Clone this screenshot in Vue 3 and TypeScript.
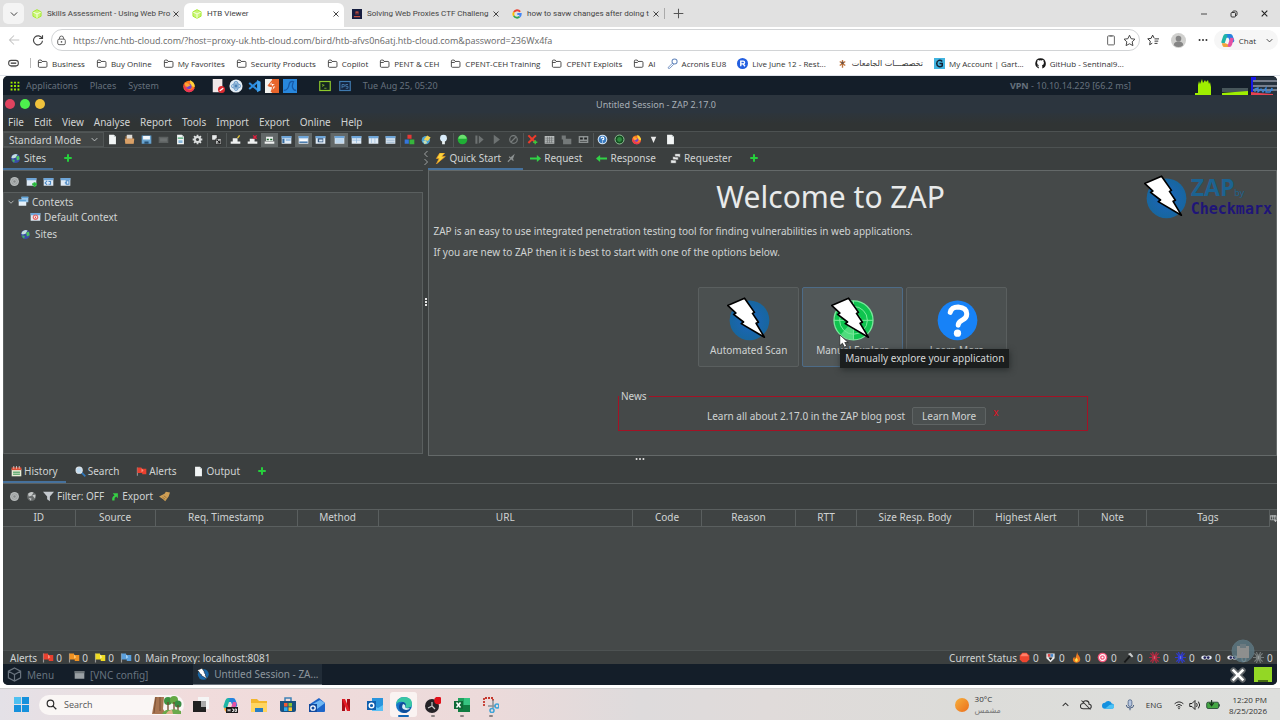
<script setup lang="ts">
import { h, ref } from 'vue'

type IconProps = { name: string; w?: number; h?: number; box?: string }

const folder = '<path d="M2 4.500Q2 3 3.500 3H6l1.500 2H13q1.500 0 1.500 1.500V12q0 1.500-1.500 1.500H3.500Q2 13.500 2 12zM2 6.500h4.500L8 5" fill="none" stroke="#3c3c3c" stroke-width="1.300"/>'
const flag = (a: string, b: string) =>
  `<path d="M2 2v12" stroke="#999" stroke-width="1.500"/><path d="M2 2h6v2h7v8H9v-2H2z" fill="${a}"/><path d="M8 3v6l3-2z" fill="${b}"/>`
const win = (inner: string) => `<path d="M1 3h14v11H1z" fill="#dfeaf5"/><path d="M1 3h14v3H1z" fill="#6ea5d8"/>${inner}`
const spider = (c: string) =>
  `<g stroke="${c}" fill="none" stroke-width="1.700"><path d="M8 8L2 2M8 8l6-6M0 8h16M8 8l-6 6M8 8l6 6M8 8L5 0M8 8l3-8M8 8l-3 8M8 8l3 8"/></g><ellipse cx="8" cy="8" rx="4" ry="4.500" fill="${c}"/><path d="M7 6h2v4H7z" fill="#cfd3d3" opacity=".4"/>`
const bolt = '<path d="M2 25 53 3 83 46 77 49 95 76 88 79 113 121 43 80 50 75 20 52 27 48z" fill="#fff" stroke="#000" stroke-width="5" stroke-linejoin="round"/>'
const page = (extra = '') => `<path d="M3 1h7l3 3v11H3z" fill="#f2f5f5"/><path d="M10 1v3h3" fill="#b6c0c0"/>${extra}`
const globe = '<circle cx="8" cy="8" r="6.500" fill="#3a4aa8"/><path d="M3 4q4-4 8-2L8 7 4 8 2 7z" fill="#c5dfe0"/><path d="M9 5l4-1 1 5-4 2z" fill="#4fc560"/><path d="M3 9l4 1-1 4q-3-2-3-5z" fill="#46b45a"/>'
const fox = '<circle cx="8" cy="8.500" r="6.500" fill="#ff7a1c"/><path d="M9 1q6 3 5.500 8L10 8z" fill="#ffd43a"/><path d="M2 5q-1 9 6 10 5 0 6.500-5Q8 16 4 9z" fill="#ec3157"/><circle cx="8" cy="8.500" r="3" fill="#7542c9"/><path d="M3 4l4 1 3 2-4 2-2-1z" fill="#ffa436"/>'
const eyes = '<ellipse cx="4.500" cy="8" rx="4" ry="3" fill="#e8ecf2"/><ellipse cx="11.500" cy="8" rx="4" ry="3" fill="#e8ecf2"/><circle cx="5.500" cy="8" r="2" fill="#20205a"/><circle cx="10.500" cy="8" r="2" fill="#20205a"/>'
const copilot = '<path d="M6 1h5q2 0 2.500 2L15 7q1 3-2 3h-2L9 5H5z" fill="#2583e0"/><path d="M6 1Q4 1 3.300 3.500L1.500 9Q1 11 3 11h2l2-6 1-3z" fill="#1fb6a6"/><path d="M10 15H5q-2 0-2.500-2L2 11h4l2 1h3z" fill="#f2a43a"/><path d="M10 15q2 0 2.800-2.500L14.500 7Q15 5 13 5h-2L9 11l-1 3z" fill="#e451a4"/>'

const art: Record<string, string> = {
  folder, fox, globe, copilot, eyes,
  chev: '<path d="M3 5.500l5 5 5-5" fill="none" stroke="currentColor" stroke-width="1.500"/>',
  chevUp: '<path d="M3 10.500l5-5 5 5" fill="none" stroke="currentColor" stroke-width="1.800"/>',
  chevLeft: '<path d="M11 2L5 8l6 6" fill="none" stroke="currentColor" stroke-width="1.800"/>',
  chevRight: '<path d="M5 2l6 6-6 6" fill="none" stroke="currentColor" stroke-width="1.800"/>',
  x: '<path d="M3 3l10 10M13 3L3 13" fill="none" stroke="currentColor" stroke-width="2"/>',
  plus: '<path d="M8 1v14M1 8h14" fill="none" stroke="currentColor" stroke-width="1.500"/>',
  add: '<path d="M8 2v12M2 8h12" fill="none" stroke="#26cf3c" stroke-width="3.200"/>',
  cube: '<path d="M8 1l6.500 3.500v7L8 15l-6.500-3.500v-7z" fill="#c9f574" stroke="#a2ea2c" stroke-width="1.500"/><path d="M2 5l6 3 6-3M8 8v7" fill="none" stroke="#f4ffdf" stroke-width="1.700"/>',
  ctf: '<path d="M0 0h16v16H0z" fill="#151c3f"/><path d="M5 4h6v5H5z" fill="#6c3038"/><path d="M6 4h4v2H6zM3 11h10v2H3z" fill="#c35345"/>',
  google: '<g fill="none" stroke-width="3"><path d="M13 4.500A6 6 0 0 0 3 5" stroke="#ea4335"/><path d="M3 5a6 6 0 0 0 0 6" stroke="#fbbc05"/><path d="M3 11a6 6 0 0 0 9 1.500" stroke="#34a853"/><path d="M8.500 8H14q0 3-2 4.500" stroke="#4285f4"/></g>',
  min: '<path d="M2 8h12" stroke="currentColor" stroke-width="1.600"/>',
  restore: '<rect x="2" y="5" width="9" height="9" rx="2" fill="none" stroke="currentColor" stroke-width="1.800"/><path d="M5 4.500Q5 2 7.500 2H11q3 0 3 3v4q0 2-2 2.500" fill="none" stroke="currentColor" stroke-width="1.800"/>',
  back: '<path d="M15 8H2M8 2L2 8l6 6" fill="none" stroke="#c4c4c4" stroke-width="1.400"/>',
  reload: '<path d="M13.500 6A6 6 0 1 0 14 9M14 1.500V6H9.500" fill="none" stroke="#444" stroke-width="1.500"/>',
  lock: '<rect x="2.500" y="6" width="11" height="8" rx="2" fill="none" stroke="#555" stroke-width="1.300"/><path d="M5 6V4.500a3 3 0 0 1 6 0V6" fill="none" stroke="#555" stroke-width="1.300"/><circle cx="8" cy="10" r="1.200" fill="#555"/>',
  clip: '<rect x="3.500" y="2.500" width="9" height="12" rx="1" fill="none" stroke="#555" stroke-width="1.200"/><path d="M6 1.500h4v2H6z" fill="#777"/>',
  star: '<path d="M8 1.500l2 4.300 4.700.6-3.400 3.200.9 4.700L8 12l-4.200 2.300.9-4.700L1.300 6.400 6 5.800z" fill="none" stroke="#444" stroke-width="1.200"/>',
  favs: '<path d="M9.500 5.500L7.500 1.500l-2 4.300-4.500.6 3.400 3.200-.9 4.700 3.500-2M10 6.500h6M10 9.500h5M10 12.500h4" fill="none" stroke="#333" stroke-width="1.300"/>',
  user: '<circle cx="8" cy="8" r="8" fill="#d0d0ce"/><circle cx="8" cy="6" r="3" fill="#858585"/><path d="M3 13q0-4 5-4t5 4q-5 4-10 0z" fill="#858585"/>',
  dots: '<g fill="currentColor"><circle cx="2.500" cy="8" r="1.600"/><circle cx="8" cy="8" r="1.600"/><circle cx="13.500" cy="8" r="1.600"/></g>',
  tag: '<rect x="1" y="3.500" width="14" height="8" rx="3.500" fill="none" stroke="#444" stroke-width="1.600"/><path d="M4 7.500h8" stroke="#444" stroke-width="2"/><path d="M4 12.500h8" stroke="#777" stroke-width="1.500"/>',
  key: '<circle cx="11" cy="5" r="3.700" fill="none" stroke="#6688bd" stroke-width="1.500"/><path d="M8 7.500L2 13.500v1.500h2l6-6" fill="none" stroke="#6688bd" stroke-width="1.300"/>',
  live: '<circle cx="8" cy="8" r="8" fill="#235fe0"/><path d="M5.500 12V4.500H9q2 0 2 2T9 8.500H6M9 8.500l2.500 3.500" fill="none" stroke="#fff" stroke-width="2"/>',
  uni: '<path d="M8 3v11M4 5l8 6M12 5l-8 6" stroke="#c0763f" stroke-width="2"/><circle cx="8" cy="7" r="2" fill="#6b5245"/>',
  gart: '<path d="M0 0h16v16H0z" fill="#41b4e0"/><path d="M12 5Q10 3 7 3.500 4 4.500 4 8t3 4.500q3 .5 5-1V8H8" fill="none" stroke="#123" stroke-width="2.200"/>',
  github: '<path d="M8 .5a7.500 7.500 0 0 0-2.500 14.600V12.500q-2 .5-2.700-1.500 2 .8 3-.5Q3 10 3 7q0-1.500.8-2.200-.3-1.200.1-2.300 1 0 2.200 1 2-.5 3.800 0 1.200-1 2.200-1 .4 1 .1 2.300.8.8.8 2.200 0 3-2.800 3.500.4.500.4 1.500v3.100A7.500 7.500 0 0 0 8 .5z" fill="#181818"/>',
  apps: '<g fill="#9fef00"><path d="M1 1h3v3H1zM6.500 1h3v3h-3zM12 1h3v3h-3zM1 6.500h3v3H1zM6.500 6.500h3v3h-3zM12 6.500h3v3h-3zM1 12h3v3H1zM6.500 12h3v3h-3zM12 12h3v3h-3z"/></g>',
  blocked: '<path d="M2 0h11v15H2z" fill="#f2e9e9"/><circle cx="12" cy="12" r="4" fill="#dc2a30"/><path d="M10 13.500l4-3" stroke="#fff" stroke-width="1.500"/>',
  atom: '<circle cx="8" cy="8" r="7.500" fill="#e4edf6"/><g fill="none" stroke="#6f9fcc" stroke-width="1.200"><ellipse cx="8" cy="8" rx="5" ry="2.500"/><ellipse cx="8" cy="8" rx="2.500" ry="5"/></g><circle cx="8" cy="8" r="2" fill="#4a83b8"/>',
  vscode: '<path d="M12 3.500L2.500 11.500M12 12.500L2.500 4.500" fill="none" stroke="#2c8de0" stroke-width="2.400"/><path d="M11.500 1v14l4-2V3z" fill="#3fa2ee"/>',
  burp: '<path d="M0 0h8v16H0z" fill="#f2f2ef"/><path d="M8 0h8v16H8z" fill="#e8642a"/><path d="M9 1L4 7h4l-4 1 5 1-2 6 6-7H9l4-2-5-1z" fill="#fff" stroke="#e8642a" stroke-width="1.200"/>',
  shark: '<path d="M0 0h16v16H0z" fill="#2887dc"/><path d="M1 13q5 0 6-7 1-4 5-3-2 5-1 7 1 3 4 3" fill="none" stroke="#1659a8" stroke-width="1.500"/>',
  term: '<rect x="1" y="2" width="14" height="12" fill="#14251f" stroke="#8ec92c" stroke-width="1.600"/><path d="M4 6l3 1-3 1.500M7 11h3" fill="none" stroke="#8ec92c"/>',
  ps: '<rect x="1" y="2" width="14" height="12" fill="#14233c" stroke="#3f79ae" stroke-width="1.600"/><path d="M4 11V6h3v3H4M12 6H9v2.500h3V11H9" fill="none" stroke="#4f88be"/>',
  page: page(),
  open: '<path d="M2 3h8l4 3v8H2z" fill="#8e6840"/><path d="M4 1h8v6H4z" fill="#dedbd5"/><path d="M1 7h14l-1 7H2z" fill="#d9a067"/>',
  save: '<path d="M1 2h14v12H1z" fill="#67a2cf"/><path d="M3 3h10v5H3z" fill="#f2f6fa"/><path d="M5 11h6v3H5z" fill="#274f70"/>',
  cam: '<path d="M1 4h14v9H1z" fill="#5c6161"/><path d="M3 6h10v5H3z" fill="#6c7171"/>',
  props: page('<path d="M4 5h8v2H4z" fill="#44a36d"/><path d="M5 9h6v4H5z" fill="#8ab7da"/>'),
  gear: '<path d="M8 1v14M1 8h14M3 3l10 10M13 3L3 13" stroke="#dadddd" stroke-width="2.600"/><circle cx="8" cy="8" r="5" fill="#dadddd"/><circle cx="8" cy="8" r="2.300" fill="#3b3f3f"/>',
  swap: '<path d="M1 1h8v8H1zM7 7h8v8H7z" fill="#e7eaea" stroke="#111"/><path d="M9 9l4 4M13 9v4H9" stroke="#111" fill="none" stroke-width="1.500"/>',
  tabOn: '<path d="M1 11h14v3H1zM4 6h7v5H4z" fill="#eef0f0"/><path d="M11 6l3-4" stroke="#dfc03a" stroke-width="2"/>',
  tabOff: '<path d="M1 11h14v3H1zM4 7h7v4H4z" fill="#eef0f0"/><path d="M9 2l5 5M14 2L9 7" stroke="#e01f3d" stroke-width="2"/>',
  names: '<path d="M1 11h14v3H1zM3 4h10v6H3z" fill="#eef0f0"/><path d="M4 8h3M9 8h3" stroke="#1a6a2a" stroke-width="2"/>',
  l1: win('<path d="M2 7h3v6H2z" fill="#33699e"/><path d="M7 7h7v3H7z" fill="#9bc0e4"/>'),
  l2: win('<path d="M3 8h10v2H3z" fill="#fff"/><path d="M2 11h12v2H2z" fill="#4d7dad"/>'),
  l3: win('<path d="M4 6h8v6H4z" fill="#33567c"/><path d="M6 8h5v3H6z" fill="#d8e6f3"/>'),
  l4: win('<path d="M2 7h12v6H2z" fill="#bcd7ee"/>'),
  l5: win('<path d="M2 9h12" stroke="#8cb4da"/><path d="M8 6v7" stroke="#8cb4da"/>'),
  l6: win('<path d="M5 6v7M10 6v7" stroke="#9bbbd9"/>'),
  l7: win('<path d="M2 9h12M2 12h12" stroke="#7e9fbe"/>'),
  blocks: '<path d="M5 1h6v6H5z" fill="#e43a37"/><path d="M1 8h6v6H1z" fill="#3476dc"/><path d="M8 8h7v7H8z" fill="#36b53c"/>',
  update: '<circle cx="7" cy="9" r="6" fill="#4ba5d8"/><path d="M4 8l5-6 5 3-4 5z" fill="#f0d354"/><path d="M3 10l4-1 2 4-4 2z" fill="#c7ddb0"/>',
  bulb: '<circle cx="8" cy="6" r="5" fill="#d9ecfa"/><path d="M6 10h4v5H6z" fill="#e9f0f2"/>',
  go: '<circle cx="8" cy="8" r="7" fill="#1faf35"/><path d="M2 7a6 6 0 0 1 12 0z" fill="#6be070"/>',
  step: '<path d="M2 2h3v12H2zM7 2v12l7-6z" fill="#6d7272"/>',
  play: '<path d="M4 1v14l9-7z" fill="#6d7272"/>',
  ban: '<circle cx="8" cy="8" r="5.500" fill="none" stroke="#777c7c" stroke-width="1.800"/><path d="M4 12l8-8" stroke="#777c7c" stroke-width="1.800"/>',
  del: '<path d="M2 2l11 11M13 2L2 13" stroke="#ee3b2b" stroke-width="3"/><path d="M9 12h6M12 9v6" stroke="#35c93e" stroke-width="2"/>',
  kbd: '<path d="M1 3h14v11H1z" fill="#b9bdbd"/><path d="M2 6h12M2 9h12M2 12h12M5 4v9M8 4v9M11 4v9" stroke="#6d7171"/>',
  lockOff: '<path d="M1 2h6v5h8v8H3V8H1z" fill="#747979"/>',
  print: '<path d="M1 3h14v10H1z" fill="#8e9393"/><path d="M3 5h4v3H3zM9 5h4v3H9zM3 10h10v1H3z" fill="#202424"/>',
  help: '<circle cx="8" cy="8" r="7" fill="#d7e8f7"/><circle cx="8" cy="8" r="5.500" fill="#3779bf"/><path d="M6 6.500q0-2 2-2t2 2-2 2v1M8 11v1.500" fill="none" stroke="#fff" stroke-width="1.600"/>',
  radar: '<circle cx="8" cy="8" r="6.500" fill="#134e20" stroke="#9ccda2" stroke-width="1.300"/><circle cx="8" cy="8" r="3.500" fill="#2f8c40"/>',
  drop: '<path d="M4 4h8l-4 9z" fill="#e9eaea"/>',
  target: '<circle cx="8" cy="8" r="6.500" fill="#b4b8b8"/><circle cx="8" cy="8" r="4" fill="none" stroke="#8d9191"/><circle cx="8" cy="8" r="1.800" fill="#868a8a"/>',
  w1: win('<path d="M9 12h7M12.500 9v7" stroke="#28b83c" stroke-width="3"/>'),
  w2: win('<path d="M6 7l-3 3 3 3M8 8h3v4H8" fill="none" stroke="#4a88c4" stroke-width="1.500"/>'),
  w3: win('<path d="M9 7h4v5H9zM7 10h3" fill="none" stroke="#4a88c4" stroke-width="1.500"/>'),
  ctxs: '<path d="M5 1h10v8H5z" fill="#9ac6ea"/><path d="M1 5h11v9H1z" fill="#e5f0f8"/><path d="M1 5h11v3H1zM5 1h10v2H5z" fill="#5fa4d9"/>',
  ctx: win('<circle cx="8" cy="9" r="4" fill="#e56b6b"/><circle cx="8" cy="9" r="2" fill="#fff"/><circle cx="8" cy="9" r="1" fill="#d33"/>'),
  quick: '<path d="M7 0h7l-4 5h5L2 16l4-8H2z" fill="#fbd43c" stroke="#e99a24"/>',
  pin: '<path d="M14 1l-3 9-4-3z" fill="#8e9393"/><path d="M5 6l7 6M8 9l-5 5" fill="none" stroke="#8e9393" stroke-width="1.800"/>',
  right: '<path d="M0 8h12" stroke="#31d246" stroke-width="3"/><path d="M10 3l6 5-6 5z" fill="#31d246"/>',
  left: '<path d="M4 8h12" stroke="#31d246" stroke-width="3"/><path d="M6 3L0 8l6 5z" fill="#31d246"/>',
  reqs: '<path d="M7 1h8v5H7zM4 5h8v5H4zM1 10h8v5H1z" fill="#e8ebeb" stroke="#333" stroke-width=".8"/>',
  cal: '<path d="M1 4h14v11H1z" fill="#e9edd6"/><path d="M1 2h14v4H1z" fill="#dd5038"/><path d="M3 9h10M3 12h10" stroke="#6bae78" stroke-width="2"/><path d="M4 0v4M8 0v4M12 0v4" stroke="#eee"/>',
  find: '<path d="M9 9l6 6" stroke="#2f78bd" stroke-width="2.500"/><circle cx="6" cy="6" r="4.500" fill="#bfdcf2" stroke="#e5e9ec" stroke-width="1.500"/>',
  flagR: flag('#e8402f', '#ff8b78'), flagO: flag('#f09222', '#ffc468'), flagY: flag('#eedb24', '#fff59b'), flagB: flag('#5ba0dd', '#a6d2f5'),
  filter: '<path d="M0 1h16l-6 7v7l-4-3V8z" fill="#c5cacf"/>',
  exportI: '<path d="M4 15q-1-7 4-9L5 2h9v9l-3-3q-4 2-3 7z" fill="#36cf44"/>',
  broom: '<path d="M0 8l8-4 2-3 6 1-2 6-5 7-3-3z" fill="#cf9f55"/><path d="M5 9l4 3M7 7l4 3" stroke="#83602c"/>',
  globeG: '<circle cx="8" cy="8" r="6.500" fill="#686c6c"/><path d="M3 4q4-4 8-2L8 7 4 8zM9 6l5-1-1 6zM4 10l4 1-1 3z" fill="#c5c8c8"/>',
  cols: '<path d="M1 1h13v10H1zM1 4h13M6 1v10M10 1v10" fill="none" stroke="#c5c8c8" stroke-width="1.500"/><path d="M9 12h7l-3.500 4z" fill="#ddd"/>',
  stop: '<path d="M5 1h6l4 4v6l-4 4H5l-4-4V5z" fill="#ee4630"/><path d="M5 2h6l3 4H2z" fill="#ff8068"/>',
  scan: '<path d="M2 2h12v7l-6 6-6-6z" fill="#e8e8e8"/><path d="M4 3h4v4H4z" fill="#d44"/><path d="M8 3h4v4H8z" fill="#48c"/><path d="M5 8h6l-3 4z" fill="#222"/>',
  fire: '<path d="M9 0q0 4 3 6 3 5 0 8-4 3-8 0-3-4 1-7 0 3 1 3 2-5 3-10z" fill="#ef7a20"/><path d="M8 8q3 3 1 6-4 1-3-3z" fill="#ffe14c"/>',
  bull: '<circle cx="8" cy="8" r="7" fill="#f2567a"/><circle cx="8" cy="8" r="4.200" fill="none" stroke="#fff" stroke-width="1.500"/><circle cx="8" cy="8" r="1.500" fill="#fff"/>',
  hammer: '<path d="M2 15l8-9" stroke="#17191a" stroke-width="2.600"/><path d="M7 3l4-2 4 5-2 2-3-3z" fill="#c8caca"/>',
  spR: spider('#b32a40'), spB: spider('#2f3bd0'), spG: spider('#757b7b'),
  hex: '<path d="M8 1l6.500 3.500v7L8 15l-6.500-3.500v-7zM1.500 4.500L8 8l6.500-3.500M8 8v7" fill="none" stroke="#68727d" stroke-width="1.300"/>',
  winGrey: '<path d="M1 3h14v11H1z" fill="#9aa0a4"/><path d="M1 3h14v3H1z" fill="#6d7478"/>',
  scanOrb: `<circle cx="68" cy="70" r="60" fill="url(#orb)"/>${bolt}`,
  explore: `<circle cx="68" cy="70" r="59" fill="#0fc44f" stroke="#78e79b" stroke-width="4"/><g fill="none" stroke="#7deb9d" stroke-width="3"><circle cx="68" cy="70" r="42"/><circle cx="68" cy="70" r="22"/><path d="M9 70h118M68 11v118"/></g><path d="M68 70L30 112a58 58 0 0 0 38 17z" fill="#6be791" opacity=".7"/>${bolt}`,
  learn: '<circle cx="68" cy="70" r="60" fill="#1782f7"/><path d="M46 46q4-16 24-16 26 2 26 21 0 12-13 18-13 6-13 16" fill="none" stroke="#fff" stroke-width="15" stroke-linecap="round"/><circle cx="68" cy="109" r="11" fill="#fff"/>',
  pointer: '<path d="M1 1v14l3.500-3L7 17l3-1.500-2.500-4.500H12z" fill="#fff" stroke="#222"/>',
  cpu: '<path d="M0 18v-2h3V8l1-4 1 3 2-5 1 4 2-3 1 2 2-2 1 4 1-2 1 5v8h3v2z" fill="#9fef00"/>',
  mem: '<path d="M0 11h26v4H0z" fill="#47565a"/><path d="M0 16l26-2v4H0z" fill="#9fef00"/>',
  net: '<path d="M0 0h26v18H0z" fill="#26323e"/><path d="M0 4h26M0 9h26M0 13h26" stroke="#c5c8d5" stroke-width="1.200"/><path d="M0 0h5v3H2v12H0z" fill="#1717e8"/><path d="M4 15v-3l3-1v4l3-3 2 3 3-4v4h4l2-4v3" fill="none" stroke="#3d87d8" stroke-width="1.300"/><path d="M0 18v-3l8 1 14 1v1z" fill="#e84352"/>',
  closeBig: '<path d="M5 5l14 14M19 5L5 19" stroke="#62676b" stroke-width="9" stroke-linecap="round"/><path d="M4 4l16 16M20 4L4 20" stroke="#fff" stroke-width="4"/>',
  green: '<path d="M0 0h18v15H0z" fill="#93d725"/><path d="M4 13h10v2H4z" fill="#456b13"/>',
  start: '<path d="M0 0h7.500v7.500H0zM8.500 0H16v7.500H8.500zM0 8.500h7.500V16H0zM8.500 8.500H16V16H8.500z" fill="#1591dc"/><path d="M0 0h7.500v7.500H0z" fill="#4fc0f0"/>',
  lens: '<circle cx="6.500" cy="6.500" r="4.800" fill="none" stroke="#2a2a2a" stroke-width="1.700"/><path d="M10 10l5 5" stroke="#2a2a2a" stroke-width="1.800"/>',
  forest: '<path d="M0 18L3 1h9l-1 12 3 5z" fill="#a87552"/><path d="M4 1l-2 16M8 1v14" stroke="#7c5236"/><circle cx="16" cy="5" r="4" fill="#3f9342"/><circle cx="22" cy="4" r="4" fill="#65a844"/><circle cx="26" cy="8" r="3.500" fill="#388c43"/><path d="M16 6v10M22 6v10M26 9v6" stroke="#704a2c" stroke-width="1.300"/><path d="M10 18q3-5 8-4 5-2 11 1v3z" fill="#6aa94b"/><path d="M14 18q2-4 6-4l1 4z" fill="#e0b28a"/>',
  task: '<path d="M5 0h11v12H5z" fill="#f5f5f5"/><path d="M0 4h8v6h5v5H0z" fill="#202020"/><path d="M8 4h5v6H8z" fill="#a9a9a9"/>',
  m365: `${copilot}<path d="M4 10h12v6H4z" fill="#1b1b1b"/><path d="M6 12v2.500M8 12v2.500M6 13.200h2M10 12h1.500v2.500H10M13 12h1.500v2.500H13z" stroke="#fff" stroke-width=".8" fill="none"/>`,
  files: '<path d="M0 2h6l2 2h8v11H0z" fill="#f3b62c"/><path d="M0 6h16v9H0z" fill="#ffd560"/><path d="M4 11h8v4H4z" fill="#277cc4"/>',
  store: '<path d="M5 4V1h6v3" fill="none" stroke="#3f83b7" stroke-width="1.500"/><path d="M0 4h16v9q0 2-2 2H2q-2 0-2-2z" fill="#185080"/><path d="M4 6h3.500v3.500H4z" fill="#f05a33"/><path d="M8.500 6H12v3.500H8.500z" fill="#86c332"/><path d="M4 10.300h3.500V14H4z" fill="#2aaaf0"/><path d="M8.500 10.300H12V14H8.500z" fill="#fbc12b"/>',
  outNew: '<path d="M1 7l9-6 6 5v8q0 1-1 1H4z" fill="#1d65c9"/><path d="M2 8l9-5 5 3-8 6z" fill="#6fb7f3"/><path d="M0 7h8v8H0z" fill="#124a9e"/><circle cx="4" cy="11" r="2.200" fill="none" stroke="#fff" stroke-width="1.300"/>',
  netflix: '<path d="M4 2h3v12H4zM9 2h3v12H9z" fill="#a90d16"/><path d="M4 2h3l5 12H9z" fill="#e31b24"/>',
  outlook: '<path d="M5 1h11v13H5z" fill="#2a94dc"/><path d="M5 8l6 3 5-3v6H5z" fill="#5cc0f4"/><path d="M0 4h9v9H0z" fill="#0f5fae"/><circle cx="4.500" cy="8.500" r="2.300" fill="none" stroke="#fff" stroke-width="1.400"/>',
  edge: '<circle cx="8" cy="8" r="8" fill="#1776c9"/><path d="M0 8Q1 0 8 0q8 0 8 7 0 4-5 4-2 0-2-1 2-4-2-5Q2 4 0 8z" fill="#39c7a4"/><path d="M3 10q0-4 4-5 4 1 2 5 0 1 2 1 2 0 4-1-2 6-7 6-5-1-5-6z" fill="#0f4d9a"/><path d="M7 7q-3 5 3 6 3 0 4-2-4 1-5-1 1-2-2-3z" fill="#d9f1f5"/>',
  obs: '<circle cx="7" cy="9" r="7" fill="#242226"/><path d="M7 9V5M7 9l-4 2M7 9l3 3" stroke="#c8c8c8" stroke-width="1.200" fill="none"/><circle cx="13" cy="3.500" r="3.800" fill="#e1111b"/>',
  excel: '<path d="M4 1h12v14H4z" fill="#20a35f"/><path d="M10 1h6v7h-6z" fill="#36c481"/><path d="M4 8h12v7H4z" fill="#107c41"/><path d="M0 4h9v8H0z" fill="#0f6b38"/><path d="M2.500 5.500l4 5M6.500 5.500l-4 5" stroke="#fff" stroke-width="1.500"/>',
  snip: '<path d="M1 9V1h9v3" fill="none" stroke="#c5372c" stroke-width="1.800" stroke-dasharray="2 1"/><path d="M10 3v8M5 9h8" stroke="#8a9298" stroke-width="1.500"/><circle cx="9" cy="13.500" r="2" fill="none" stroke="#3fa4d8" stroke-width="1.600"/><circle cx="14" cy="9" r="2" fill="none" stroke="#3fa4d8" stroke-width="1.600"/>',
  cloudOff: '<path d="M4 13h8a3 3 0 0 0 0-6 4 4 0 0 0-8-1 3.500 3.500 0 0 0 0 7zM2 2l12 12" fill="none" stroke="#333" stroke-width="1.400"/>',
  cloud: '<path d="M4 13h8a3.500 3.500 0 0 0 1-7A5 5 0 0 0 4 5a4 4 0 0 0 0 8z" fill="#1490df"/><path d="M4 13l6-5 4-1a3 3 0 0 1-2 6z" fill="#4cc2f5"/>',
  mic: '<rect x="5.500" y="1" width="5" height="9" rx="2.500" fill="#b5c5df" stroke="#41597f"/><path d="M3 8q0 4 5 4t5-4M8 12v3" fill="none" stroke="#41597f" stroke-width="1.300"/>',
  wifi: '<path d="M1 6q7-6 14 0M3.500 9q4.500-4 9 0M6 11.500q2-2 4 0" fill="none" stroke="#222" stroke-width="1.500"/><circle cx="8" cy="13.500" r="1.200" fill="#222"/>',
  sound: '<path d="M1 6h3l4-4v12l-4-4H1zM10 5.500q2 2.500 0 5M12.500 3.500q3.500 4.500 0 9" fill="none" stroke="#222" stroke-width="1.300"/>',
  batt: '<rect x="1" y="4" width="17" height="9" rx="2" fill="#44a744" stroke="#243" stroke-width="1.200"/><path d="M19 7v3" stroke="#243" stroke-width="1.500"/><path d="M8 1v7M5 5l3 4 3-4" stroke="#17351b" stroke-width="1.600" fill="none"/>',
  clipboard: '<circle cx="12" cy="12" r="11" fill="#5d7984" stroke="#627d88" opacity=".8"/><path d="M6 7h12v12H6z" fill="#8e8f8e"/><path d="M9 5h6v4H9z" fill="#6c7a80"/>',
}

const Icon = (p: IconProps) =>
  h('svg', { width: p.w ?? 11, height: p.h ?? p.w ?? 11, viewBox: p.box ?? '0 0 16 16', class: 'icon', 'aria-hidden': 'true', innerHTML: art[p.name] })
Icon.props = ['name', 'w', 'h', 'box']

const url = ref('https://vnc.htb-cloud.com/?host=proxy-uk.htb-cloud.com/bird/htb-afvs0n6atj.htb-cloud.com&password=236Wx4fa')
const query = ref('')
const mode = ref('Standard Mode')

const tabs = [
  { icon: 'cube', text: 'Skills Assessment - Using Web Pro', on: false },
  { icon: 'cube', text: 'HTB Viewer', on: true },
  { icon: 'ctf', text: 'Solving Web Proxies CTF Challeng', on: false },
  { icon: 'google', text: 'how to savw changes after doing t', on: false },
]
const bookmarks = [
  ['folder', 'Business'], ['folder', 'Buy Online'], ['folder', 'My Favorites'], ['folder', 'Security Products'],
  ['folder', 'Copilot'], ['folder', 'PENT & CEH'], ['folder', 'CPENT-CEH Training'], ['folder', 'CPENT Exploits'],
  ['folder', 'AI'], ['key', 'Acronis EU8'], ['live', 'Live June 12 - Rest...'], ['uni', 'تخصصـــات الجامعات'],
  ['gart', 'My Account | Gart...'], ['github', 'GitHub - Sentinal9...'],
]
const launchers = ['blocked', 'atom', 'vscode', 'burp', 'shark']
const menus = ['File', 'Edit', 'View', 'Analyse', 'Report', 'Tools', 'Import', 'Export', 'Online', 'Help']
const toolGroups = [
  ['page', 'open', 'save', 'cam', 'props', 'gear'], ['swap'], ['tabOn', 'tabOff', 'names', 'l1', 'l2', 'l3'],
  ['l4', 'l5', 'l6', 'l7'], ['blocks', 'update', 'bulb'], ['go', 'step', 'play', 'ban'],
  ['del', 'kbd', 'lockOff', 'print'], ['help', 'radar', 'fox', 'drop', 'page'],
]
const pressed = ['names', 'l2', 'l4']
const workTabs = [['quick', 'Quick Start'], ['right', 'Request'], ['left', 'Response'], ['reqs', 'Requester']]
const infoTabs = [['cal', 'History'], ['find', 'Search'], ['flagR', 'Alerts'], ['page', 'Output']]
const columns: { name: string; width?: number }[] = [
  { name: 'ID', width: 72 }, { name: 'Source', width: 80 }, { name: 'Req. Timestamp', width: 142 }, { name: 'Method', width: 81 },
  { name: 'URL' }, { name: 'Code', width: 69 }, { name: 'Reason', width: 94 }, { name: 'RTT', width: 61 },
  { name: 'Size Resp. Body', width: 117 }, { name: 'Highest Alert', width: 105 }, { name: 'Note', width: 68 }, { name: 'Tags', width: 123 },
]
const alerts = ['flagR', 'flagO', 'flagY', 'flagB']
const scans = ['stop', 'scan', 'fire', 'bull', 'hammer', 'spR', 'spB', 'eyes', 'eyes', 'spG']
const taskApps = ['task', 'm365', 'files', 'store', 'outNew', 'netflix', 'outlook', 'edge', 'obs', 'excel', 'snip']
const running = ['obs', 'excel', 'snip']
</script>

<template>
  <div class="screen">
    <svg class="defs" aria-hidden="true">
      <defs><radialGradient id="orb"><stop offset="0" stop-color="#1c65bd" /><stop offset="1" stop-color="#17669f" /></radialGradient></defs>
    </svg>

    <header class="browser">
      <div class="tabstrip">
        <button class="tab-search" aria-label="Search tabs"><Icon name="chev" :w="10" /></button>
        <div v-for="t in tabs" :key="t.text" class="tab" :class="{ on: t.on }">
          <Icon :name="t.icon" :w="10" />
          <span class="tab-text">{{ t.text }}</span>
          <button aria-label="Close tab"><Icon name="x" :w="8" /></button>
        </div>
        <button class="new-tab" aria-label="New tab"><Icon name="plus" :w="11" /></button>
        <div class="win-controls">
          <button aria-label="Minimize"><Icon name="min" :w="8" /></button>
          <button aria-label="Restore"><Icon name="restore" :w="8" /></button>
          <button aria-label="Close"><Icon name="x" :w="9" /></button>
        </div>
      </div>
      <div class="address-row">
        <button aria-label="Back"><Icon name="back" :w="12" /></button>
        <button aria-label="Refresh"><Icon name="reload" :w="12" /></button>
        <label class="address">
          <Icon name="lock" :w="11" />
          <input v-model="url" aria-label="Address" spellcheck="false" />
          <Icon name="clip" :w="12" />
          <Icon name="star" :w="13" />
        </label>
        <button aria-label="Favorites"><Icon name="favs" :w="12" /></button>
        <button aria-label="Profile"><Icon name="user" :w="15" /></button>
        <button aria-label="More"><Icon name="dots" :w="10" /></button>
        <button class="chat"><Icon name="copilot" :w="15" /><span>Chat</span><Icon name="chev" :w="9" /></button>
      </div>
      <nav class="bookmarks">
        <Icon name="tag" :w="11" />
        <span class="bar"></span>
        <a v-for="b in bookmarks" :key="b[1]" href="#" :class="{ arabic: b[0] === 'uni' }"><Icon :name="b[0]" :w="11" />{{ b[1] }}</a>
      </nav>
    </header>

    <main class="desktop">
      <div class="panel">
        <Icon name="apps" :w="10" />
        <nav class="places"><a href="#">Applications</a><a href="#">Places</a><a href="#">System</a></nav>
        <Icon name="fox" :w="14" />
        <div class="launchers"><Icon v-for="l in launchers" :key="l" :name="l" :w="14" /></div>
        <Icon name="term" :w="12" />
        <Icon name="ps" :w="12" class="ps" />
        <time>Tue Aug 25, 05:20</time>
        <span class="vpn"><b>VPN</b> - 10.10.14.229 [66.2 ms]</span>
        <div class="meters">
          <Icon name="cpu" :w="20" :h="18" box="0 0 20 18" />
          <Icon name="mem" :w="26" :h="18" box="0 0 26 18" class="mem" />
          <Icon name="net" :w="26" :h="18" box="0 0 26 18" />
        </div>
      </div>

      <div class="title-bar">
        <div class="lights"><button class="red" aria-label="Close"></button><button class="lime" aria-label="Maximize"></button><button class="amber" aria-label="Minimize"></button></div>
        <h1>Untitled Session - ZAP 2.17.0</h1>
      </div>
      <nav class="menu"><button v-for="m in menus" :key="m">{{ m }}</button></nav>

      <div class="toolbar">
        <label class="mode">
          <select v-model="mode" aria-label="Mode"><option>Standard Mode</option></select>
          <Icon name="chev" :w="9" />
        </label>
        <div v-for="(g, i) in toolGroups" :key="i" class="group">
          <button v-for="t in g" :key="t" :class="{ pressed: pressed.includes(t) }" :aria-label="t"><Icon :name="t" /></button>
        </div>
      </div>

      <div class="upper">
        <section class="sites">
          <div class="tabs">
            <button class="on"><Icon name="globe" />Sites</button>
            <button class="add" aria-label="Add tab"><Icon name="add" :w="10" /></button>
          </div>
          <div class="mini"><Icon name="target" /><Icon name="w1" /><Icon name="w2" /><Icon name="w3" /></div>
          <ul class="tree">
            <li><Icon name="chev" :w="8" /><Icon name="ctxs" />Contexts</li>
            <li class="child"><Icon name="ctx" />Default Context</li>
            <li class="root"><Icon name="globe" />Sites</li>
          </ul>
        </section>
        <div class="splitter">
          <span><Icon name="chevLeft" :w="8" /><Icon name="chevRight" :w="8" /></span>
          <i></i>
        </div>
        <section class="work">
          <div class="tabs">
            <button v-for="(t, i) in workTabs" :key="t[1]" :class="{ on: i === 0 }">
              <Icon :name="t[0]" />{{ t[1] }}<Icon v-if="i === 0" name="pin" :w="10" class="pin" />
            </button>
            <button class="add" aria-label="Add tab"><Icon name="add" :w="10" /></button>
          </div>
          <div class="welcome">
            <div class="hero">
              <h2>Welcome to ZAP</h2>
              <div class="logo">
                <Icon name="scanOrb" :w="43" :h="44" box="0 0 130 132" />
                <div><strong>ZAP<small>by</small></strong><em>Checkmarx</em></div>
              </div>
            </div>
            <p>ZAP is an easy to use integrated penetration testing tool for finding vulnerabilities in web applications.</p>
            <p>If you are new to ZAP then it is best to start with one of the options below.</p>
            <div class="choices">
              <button><Icon name="scanOrb" :w="43" :h="44" box="0 0 130 132" />Automated Scan</button>
              <div class="hovered">
                <button><Icon name="explore" :w="43" :h="44" box="0 0 130 132" />Manual Explore</button>
                <div class="tip" role="tooltip">Manually explore your application</div>
                <Icon name="pointer" :w="10" :h="14" box="0 0 13 18" class="pointer" />
              </div>
              <button><Icon name="learn" :w="43" :h="44" box="0 0 130 132" />Learn More</button>
            </div>
            <fieldset>
              <legend>News</legend>
              <span>Learn all about 2.17.0 in the ZAP blog post</span>
              <button class="more">Learn More</button>
              <button class="dismiss">x</button>
            </fieldset>
          </div>
        </section>
      </div>

      <div class="grip"><Icon name="dots" :w="10" /></div>

      <section class="lower">
        <div class="tabs">
          <button v-for="(t, i) in infoTabs" :key="t[1]" :class="{ on: i === 0 }"><Icon :name="t[0]" />{{ t[1] }}</button>
          <button class="add" aria-label="Add tab"><Icon name="add" :w="10" /></button>
        </div>
        <div class="filters">
          <Icon name="target" /><Icon name="globeG" />
          <button><Icon name="filter" />Filter: OFF</button>
          <button><Icon name="exportI" :w="9" />Export</button>
          <Icon name="broom" />
        </div>
        <div class="grid">
          <table>
            <colgroup><col v-for="c in columns" :key="c.name" :style="c.width ? { width: c.width + 'px' } : {}" /></colgroup>
            <thead><tr><th v-for="c in columns" :key="c.name">{{ c.name }}</th></tr></thead>
          </table>
          <button class="cols" aria-label="Columns"><Icon name="cols" :w="7" /></button>
        </div>
      </section>

      <footer class="status">
        <span>Alerts</span>
        <span v-for="a in alerts" :key="a" class="count"><Icon :name="a" :w="12" />0</span>
        <span>Main Proxy: localhost:8081</span>
        <span class="current">Current Status</span>
        <span v-for="(s, i) in scans" :key="i" class="scan"><Icon :name="s" />0</span>
      </footer>

      <div class="dock">
        <button class="menu-btn"><Icon name="hex" :w="15" />Menu</button>
        <button class="task-vnc"><Icon name="winGrey" />[VNC config]</button>
        <button class="task-zap"><Icon name="scanOrb" :w="12" box="0 0 130 132" />Untitled Session - ZA...</button>
        <div class="dock-end"><Icon name="closeBig" :w="16" box="0 0 24 24" /><Icon name="green" :w="18" :h="15" box="0 0 18 15" /></div>
      </div>
      <button class="float" aria-label="Clipboard"><Icon name="clipboard" :w="24" box="0 0 24 24" /></button>
    </main>

    <footer class="taskbar">
      <button class="start" aria-label="Start"><Icon name="start" :w="15" /></button>
      <label class="search">
        <Icon name="lens" :w="11" />
        <input v-model="query" placeholder="Search" aria-label="Search" />
        <Icon name="forest" :w="30" :h="18" box="0 0 30 18" />
      </label>
      <button v-for="a in taskApps" :key="a" class="app" :class="{ active: a === 'edge', running: running.includes(a) }" :aria-label="a"><Icon :name="a" :w="16" /></button>
      <div class="weather"><i></i><div>30°C<br /><span>مشمس</span></div></div>
      <div class="tray">
        <Icon name="chevUp" :w="9" /><Icon name="cloudOff" :w="12" /><Icon name="cloud" :w="12" /><Icon name="mic" :w="12" />
        <span>ENG</span>
      </div>
      <div class="net"><Icon name="wifi" :w="10" /><Icon name="sound" :w="12" /><Icon name="batt" :w="14" :h="12" box="0 0 20 16" /></div>
      <time class="clock">12:20 PM<br />8/25/2026</time>
    </footer>
  </div>
</template>

<style>
body { margin: 0; background: #fff; }
</style>

<style scoped>
.screen { display: flex; flex-direction: column; height: 100vh; min-height: 600px; overflow: hidden; font: 8px "Open Sans", sans-serif; color: #333; background: #fff; }
.screen * { box-sizing: border-box; }
.defs { position: absolute; width: 0; height: 0; }
button, select, input { font: inherit; color: inherit; background: none; border: 0; padding: 0; margin: 0; outline: 0; }
button { display: flex; align-items: center; justify-content: center; white-space: nowrap; }
a { color: inherit; text-decoration: none; white-space: nowrap; }
.icon { display: block; flex: none; }

.tabstrip { display: flex; align-items: center; height: 27px; background: #e1e1e1; padding-left: 3px; }
.tab-search { width: 21px; height: 21px; border-radius: 5px; background: #f4f4f4; }
.tab { display: flex; align-items: center; width: 160px; height: 27px; padding: 0 4px 0 8px; color: #444; font-family: Roboto, sans-serif; }
.tab.on { background: #fff; border-radius: 6px 6px 0 0; margin-top: 3px; height: 24px; padding-bottom: 3px; }
.tab-text { flex: 1; padding-left: 5px; white-space: nowrap; }
.new-tab { padding-left: 8px; border-left: 1px solid #aaa; color: #555; }
.win-controls { display: flex; gap: 22px; margin-left: auto; padding-right: 11px; color: #222; }
.address-row { display: flex; align-items: center; gap: 12px; height: 26px; padding: 0 2px 0 8px; }
.address { display: flex; align-items: center; flex: 1; gap: 6px; height: 22px; margin: 0 -5px 0 -5px; border: 1px solid #d2d4d6; border-radius: 11px; padding: 0 3px 0 4px; }
.address input { flex: 1; font-size: 9px; color: #666; }
.chat { gap: 4px; height: 20px; margin-left: -6px; padding: 0 4px 0 6px; border-radius: 10px; background: #f6f6f6; }
.chat span { padding-right: 5px; }
.bookmarks { display: flex; align-items: center; gap: 11px; height: 23px; padding: 0 8px 2px; border-bottom: 1px solid #dfe3ea; }
.bookmarks a { display: flex; align-items: center; gap: 4px; }
.bookmarks .arabic { font-family: "DejaVu Sans", sans-serif; }
.bar { width: 1px; height: 10px; margin-right: -5px; background: #bbb; }

.desktop { position: relative; display: flex; flex-direction: column; flex: 1; min-height: 0; margin: 0 3px 3px; border-radius: 5px; overflow: hidden; background: #3b3f3f; color: #d0d3d3; font: 10px "Noto Sans", sans-serif; }
.panel { display: flex; align-items: center; height: 19px; padding-left: 7px; background: #141e29; color: #66717d; font-size: 9px; }
.places { display: flex; gap: 12px; margin: 0 23px 0 6px; }
.launchers { display: flex; gap: 4px; margin: 0 22px 0 15px; }
.ps { margin-left: 8px; }
.panel time { margin-left: 12px; }
.vpn { margin-left: auto; }
.meters { display: flex; align-items: flex-end; gap: 3px; margin-left: 64px; }
.mem { margin-left: 4px; }
.title-bar { display: flex; align-items: center; height: 18px; padding: 0 2px; background: #2c353e; color: #a7afb6; }
.lights { display: flex; gap: 5px; flex: 1; }
.title-bar::after { content: ""; flex: 1; }
.lights button { width: 10px; height: 10px; border-radius: 50%; }
.red { background: #e0435f; }
.lime { background: #4df04d; }
.amber { background: #f0c23c; }
h1 { margin: 0; padding-left: 32px; font-size: 9px; font-weight: 400; }
.menu { display: flex; gap: 10px; height: 18px; padding-left: 5px; background: linear-gradient(#2d353c, #303434 60%); }
.toolbar { display: flex; align-items: center; height: 17px; border-top: 1px solid #4d5252; border-bottom: 1px solid #4d5252; }
.mode { display: flex; align-items: center; width: 101px; height: 15px; padding: 0 4px 0 5px; border: 1px solid #515656; background: #424646; }
.mode select { flex: 1; appearance: none; }
.group { display: flex; padding-right: 1px; border-right: 1px solid #515656; }
.group:last-child { border: 0; }
.group button { width: 17px; height: 14px; }
.group .pressed { background: #626868; }

.upper { display: flex; flex: 310 1 0; min-height: 0; }
.sites { display: flex; flex-direction: column; width: 33%; }
.tabs { display: flex; height: 23px; border-bottom: 1px solid #5b6060; }
.tabs button { gap: 3px; padding: 0 7px; border-bottom: 2px solid transparent; }
.tabs .on { border-bottom-color: #46719c; }
.tabs .add { padding: 0 10px; }
.tabs .pin { margin-left: 2px; }
.mini { display: flex; align-items: center; gap: 6px; height: 21px; padding-left: 6px; }
.tree { flex: 1; margin: 0 0 2px; padding: 1px 3px; border: 1px solid #5a5f5f; background: #454949; list-style: none; }
.tree li { display: flex; align-items: center; gap: 3px; height: 15px; }
.tree .child { padding-left: 23px; }
.tree .root { height: 20px; padding-left: 13px; gap: 4px; }
.splitter { display: flex; flex-direction: column; align-items: center; justify-content: space-between; width: 5px; padding-top: 2px; color: #a9adad; }
.splitter i { width: 2px; height: 8px; margin-bottom: 150px; background: repeating-linear-gradient(#e6e6e6 0 2px, transparent 2px 3px); }
.work { display: flex; flex-direction: column; flex: 1; min-width: 0; }
.work .tabs { height: 22px; border: 0; }
.welcome { display: flex; flex-direction: column; flex: 1; padding: 2px 4px 0; border: 1px solid #646969; background: #454949; }
.hero { display: flex; align-items: center; height: 48px; padding-left: 84px; }
h2 { flex: 1; margin: 0; text-align: center; font-size: 30px; font-weight: 400; line-height: 40px; color: #e8eaea; }
.logo { display: flex; align-items: center; gap: 4px; }
.logo div { display: flex; flex-direction: column; }
.logo strong { font: 700 23px/18px "Open Sans", sans-serif; color: #1c6391; }
.logo small { font-size: 9px; font-weight: 400; }
.logo em { font: 700 15px/15px "DejaVu Sans Mono", monospace; color: #1f1578; }
p { margin: 0; line-height: 21px; }
.choices { display: flex; justify-content: center; gap: 3px; margin-top: 24px; }
.choices button { flex-direction: column; gap: 2px; width: 101px; height: 80px; border: 1px solid #5a5f5f; border-radius: 2px; background: #4b5050; }
.hovered { position: relative; z-index: 1; }
.hovered button { border-color: #4d6b87; background: #525859; }
.tip { position: absolute; left: 38px; top: 62px; height: 19px; padding: 0 5px; line-height: 19px; white-space: nowrap; background: #1b1e1e; color: #d6d8d8; box-shadow: 1px 2px 6px #2a2e2e; }
.pointer { position: absolute; left: 37px; top: 47px; }
fieldset { display: flex; align-items: center; justify-content: center; gap: 7px; width: 56%; margin: 22px auto 0; padding: 4px 0 5px; border: 1px solid #a31225; }
legend { padding: 0 2px; line-height: 14px; }
.more { height: 18px; padding: 0 9px; border: 1px solid #5f6464; border-radius: 2px; background: #4b5050; }
.dismiss { align-self: flex-start; color: #e01022; line-height: 10px; }
.grip { display: flex; justify-content: center; height: 5px; align-items: center; color: #e6e6e6; }

.lower { display: flex; flex-direction: column; flex: 190 1 0; min-height: 0; }
.lower .tabs { gap: 1px; }
.lower .tabs button { padding: 0 8px; gap: 2px; }
.filters { display: flex; align-items: center; gap: 6px; height: 25px; padding: 0 0 1px 6px; }
.filters button { gap: 3px; }
.grid { display: flex; align-items: flex-start; flex: 1; border-top: 1px solid #5a5f5f; background: #454949; }
table { flex: 1; table-layout: fixed; border-collapse: collapse; }
th { height: 16px; padding: 0; border-right: 1px solid #5a5f5f; border-bottom: 1px solid #5a5f5f; background: #3f4343; font-weight: 400; line-height: 15px; }
.cols { width: 7px; height: 16px; }
.status { display: flex; align-items: center; height: 14px; padding: 0 4px 0 7px; border-top: 1px solid #4d5252; white-space: nowrap; }
.count { display: flex; align-items: center; gap: 2px; width: 26px; margin-left: 5px; margin-right: -5px; }
.count + span:not(.count) { margin-left: 4px; }
.current { margin-left: auto; padding-right: 2px; }
.scan { display: flex; align-items: center; gap: 3px; width: 26px; }
.scan:last-child { width: 20px; }
.dock { display: flex; align-items: center; height: 21px; background: #141e29; color: #67737f; }
.dock button { gap: 5px; height: 21px; }
.menu-btn { padding-left: 4px; }
.task-vnc { margin-left: 20px; }
.dock .task-zap { width: 129px; margin-left: 45px; background: #212c37; border-bottom: 1px solid #68717a; color: #8d969e; }
.dock-end { display: flex; gap: 8px; margin-left: auto; padding-right: 5px; }
.float { position: absolute; right: 22px; bottom: 22px; }

.taskbar { display: flex; align-items: center; height: 32px; padding-right: 13px; border-top: 1px solid #cfcfcf; background: linear-gradient(90deg, #e4e1e7, #f1dcdc 15%, #ecdada 38%, #dedbdc 50%, #e0dbda 60%, #dcdcd9 75%, #dedfdd); }
.start { width: 42px; }
.search { display: flex; align-items: center; gap: 7px; width: 145px; height: 20px; margin: 0 2px 0 -3px; padding: 0 2px 0 7px; border-radius: 10px; background: #faf6f5; }
.search input { flex: 1; min-width: 0; font-size: 9px; }
.search input::placeholder { color: #555; }
.app { position: relative; width: 27px; height: 25px; margin: 0 1px; border-radius: 3px; }
.app.active { background: #faf3f2; }
.app.active::after, .app.running::after { content: ""; position: absolute; bottom: 0; width: 4px; height: 2px; border-radius: 1px; background: #8a8383; }
.app.active::after { width: 11px; background: #1065b5; }
.weather { display: flex; align-items: center; gap: 6px; margin-left: auto; }
.weather i { width: 14px; height: 14px; border-radius: 50%; background: linear-gradient(135deg, #f6b03d, #ec6f1c); }
.weather div { line-height: 11px; }
.weather span { color: #777; font-family: "DejaVu Sans", sans-serif; }
.tray { display: flex; align-items: center; gap: 10px; margin-left: 60px; }
.net { display: flex; align-items: center; gap: 5px; margin-left: 12px; }
.clock { margin-left: 9px; text-align: right; line-height: 11px; }
</style>
